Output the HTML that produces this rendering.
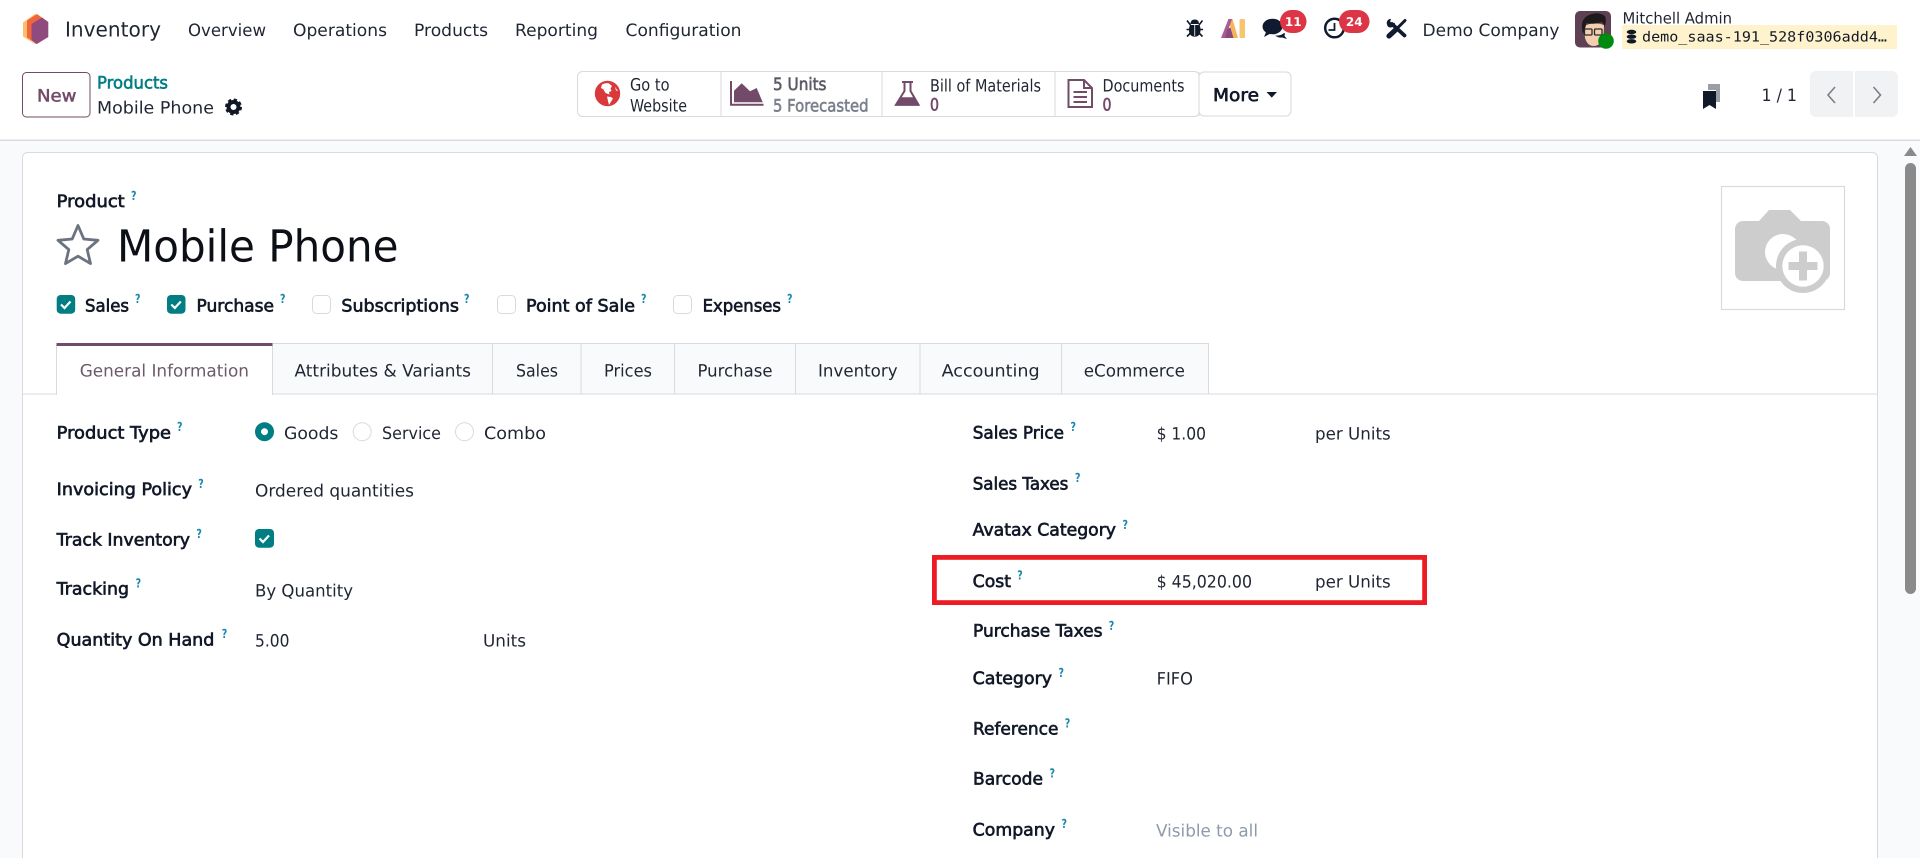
<!DOCTYPE html>
<html lang="en">
<head>
<meta charset="utf-8">
<title>Mobile Phone - Inventory</title>
<style>
html,body{margin:0;padding:0;width:1920px;height:858px;overflow:hidden;background:#fff}
svg{display:block;position:absolute;left:0;top:0}
text{font-family:"DejaVu Sans","Liberation Sans",sans-serif;font-size:17px;fill:#1f2532;text-rendering:geometricPrecision;white-space:pre}
.b{fill:#111827;stroke:#111827;stroke-width:.65px}
.s{font-size:12.5px;font-weight:700;fill:#1a87ad}
.g{fill:#8e9aab}
.m{font-family:"DejaVu Sans Mono","Liberation Mono",monospace;font-size:14px;fill:#111827}
.w{fill:#fff;font-weight:700;font-size:12px}
</style>
</head>
<body>
<svg width="1920" height="858" viewBox="0 0 1920 858" xmlns="http://www.w3.org/2000/svg">
<!-- backgrounds -->
<rect width="1920" height="858" fill="#fff"/>
<rect y="140" width="1920" height="718" fill="#f9fafb"/>
<rect y="139.500" width="1920" height="1.500" fill="#d8dadd"/>
<!-- card -->
<rect x="22.500" y="152.500" width="1855" height="730" rx="5" fill="#fff" stroke="#d8dadd"/>

<!-- scrollbar -->
<path d="M1904 156l6.500-9 6.500 9z" fill="#8a8a8a"/>
<rect x="1905" y="163" width="11" height="431" rx="5.500" fill="#8a8a8a"/>

<!-- navbar logo -->
<path d="M23 22.500L35 14l6 4v22l-6 4-12-7.500z" fill="#fbbf6c"/>
<path d="M27 20.500L37 14l11 8v15l-11 7-10-6.500z" fill="#f0653a"/>
<path d="M31.500 24L42 17.500l6.300 4.500v15L36.500 44 31.500 40z" fill="#8f4a7e"/>
<text x="65" y="36.500" textLength="96" lengthAdjust="spacingAndGlyphs" style="font-size:20.500px">Inventory</text>
<text x="188" y="36" textLength="78" lengthAdjust="spacingAndGlyphs">Overview</text>
<text x="293" y="36" textLength="94" lengthAdjust="spacingAndGlyphs">Operations</text>
<text x="414" y="36" textLength="74" lengthAdjust="spacingAndGlyphs">Products</text>
<text x="515" y="36" textLength="83" lengthAdjust="spacingAndGlyphs">Reporting</text>
<text x="625.500" y="36" textLength="116" lengthAdjust="spacingAndGlyphs">Configuration</text>

<!-- systray: bug -->
<g fill="#111827">
<path d="M1190 25h9.500q1 2 1 5 0 6.500-5.750 6.700-5.750-.2-5.750-6.700 0-3 1-5z"/>
<path d="M1190.500 24q0-4.500 4.250-4.500t4.250 4.500z"/>
</g>
<path d="M1187 20.500l3.500 4.500M1202.500 20.500l-3.500 4.500M1186.500 29.500h4M1203 29.500h-4M1187 36.500l3.500-3.500M1202.500 36.500l-3.500-3.500" stroke="#111827" stroke-width="1.600" fill="none"/>
<path d="M1194.750 25v11" stroke="#fff" stroke-width=".8"/>
<!-- AI -->
<path d="M1228 19h4.500l5.500 19h-4.500l-2.500-9z" fill="#f8b259"/>
<path d="M1228.500 19h3.500l-6.500 19h-4.500z" fill="#a85b8e"/>
<path d="M1227.500 29l3-1.500 3 10.500h-8.500z" fill="#8a4a7c"/>
<rect x="1239.500" y="19" width="5.500" height="19" rx="1" fill="#f8c56e"/>
<!-- chat -->
<ellipse cx="1272.500" cy="26.500" rx="10" ry="7.800" fill="#111b30"/>
<path d="M1264 37l2.500-6 5 2z" fill="#111b30"/>
<path d="M1275 35.500q6 .5 9-2.500l1 .5-.5 2.500 2.500 3-5-1.500q-4 .5-7-2z" fill="#111b30"/>
<rect x="1280" y="10" width="26.500" height="23" rx="11.500" fill="#dc3545"/>
<text class="w" x="1293.250" y="26" text-anchor="middle">11</text>
<!-- clock -->
<circle cx="1334.500" cy="28" r="9.300" fill="none" stroke="#111b30" stroke-width="2.500"/>
<path d="M1334.500 23v7h-6" stroke="#111b30" stroke-width="1.800" fill="none"/>
<rect x="1339" y="10" width="30.500" height="23" rx="11.500" fill="#dc3545"/>
<text class="w" x="1354.250" y="26" text-anchor="middle">24</text>
<!-- tools: wrench and screwdriver -->
<path d="M1392 24l12.500 11.500" stroke="#111b30" stroke-width="3.800" stroke-linecap="round"/>
<path d="M1386.700 23q.3-4 4.300-4.300l-.8 2.800 2 2 2.800-.8q-.3 4-4 4.800-3.800.5-4.300-4.500z" fill="#111b30"/>
<path d="M1405 20.500l-8 8" stroke="#111b30" stroke-width="3" stroke-linecap="round"/>
<path d="M1395.500 30l-6.500 6" stroke="#111b30" stroke-width="5.200" stroke-linecap="round"/>
<text x="1422.500" y="36" textLength="137" lengthAdjust="spacingAndGlyphs">Demo Company</text>

<!-- avatar -->
<rect x="1575" y="11" width="36" height="36.500" rx="5" fill="#5f4156"/>
<path d="M1584 26q10-5 20-1l-.5 12q-3 9-10 9-6 0-8.500-8z" fill="#f2cfae"/>
<path d="M1583 34q-4-15 6-19 9-4 16 1 2 5-.5 11-1-4-3-5-8 3-15 1-1 5-3.500 11z" fill="#1e1a1c"/>
<rect x="1584.500" y="29" width="7.500" height="6" rx="1" fill="none" stroke="#2a2a2a" stroke-width="1.300"/>
<rect x="1594.500" y="29" width="7.500" height="6" rx="1" fill="none" stroke="#2a2a2a" stroke-width="1.300"/>
<circle cx="1606" cy="41" r="7.800" fill="#008a0e"/>
<text x="1622.500" y="23.500" textLength="109.500" lengthAdjust="spacingAndGlyphs" style="font-size:15.500px">Mitchell Admin</text>
<rect x="1622" y="25" width="275" height="24" fill="#fff3cd"/>
<g fill="#111827"><ellipse cx="1631.500" cy="32" rx="4.800" ry="2.200"/><ellipse cx="1631.500" cy="36.700" rx="4.800" ry="2.200"/><ellipse cx="1631.500" cy="41.300" rx="4.800" ry="2.200"/></g>
<text class="m" x="1642" y="41.500" textLength="245" lengthAdjust="spacingAndGlyphs">demo_saas-191_528f0306add4…</text>

<!-- control panel -->
<rect x="22.500" y="72.500" width="67.500" height="44.500" rx="4" fill="#fff" stroke="#714B67"/>
<text x="37" y="101.500" textLength="39.500" lengthAdjust="spacingAndGlyphs" style="fill:#714B67;stroke:#714B67;stroke-width:.5px">New</text>
<text x="97" y="88.500" textLength="71" lengthAdjust="spacingAndGlyphs" style="fill:#017E84;stroke:#017E84;stroke-width:.6px">Products</text>
<text x="97" y="113.500" textLength="117" lengthAdjust="spacingAndGlyphs">Mobile Phone</text>
<circle cx="233.500" cy="107" r="5" fill="none" stroke="#111827" stroke-width="4"/>
<circle cx="233.500" cy="107" r="7.200" fill="none" stroke="#111827" stroke-width="2.600" stroke-dasharray="3.200 2.450"/>

<!-- stat buttons -->
<rect x="577.500" y="71.500" width="622" height="45" rx="5" fill="#fff" stroke="#d8dadd"/>
<path d="M721 72v44M882 72v44M1055 72v44M1199 72v44" stroke="#d8dadd"/>
<!-- globe -->
<circle cx="607.500" cy="93.500" r="12.700" fill="#d9393b"/>
<path d="M602 84.500q4-2 7-1l3 2.500-1.500 2.500 1 2.500-2.500 1 .5 2.500-4-1.500-2-3.500-2.500-1.500zM607 96.500l4 .5 2 1.500-2.500 4-1.500 2.500-1-4zM615 87l3 4-2-.5z" fill="#fff"/>
<text x="630" y="90.500" textLength="39.500" lengthAdjust="spacingAndGlyphs">Go to</text>
<text x="630" y="111.500" textLength="57" lengthAdjust="spacingAndGlyphs">Website</text>
<!-- chart -->
<path d="M731 81v23.700h32.500" fill="none" stroke="#714B67" stroke-width="2"/>
<path d="M734 102.300v-11.600l7.700-7.400 8.300 8 6.700-3.300 6 14.300z" fill="#714B67"/>
<text x="773" y="90" textLength="53.500" lengthAdjust="spacingAndGlyphs" style="fill:#5d5866;stroke:#5d5866;stroke-width:.6px">5 Units</text>
<text x="773" y="111.500" textLength="95.500" lengthAdjust="spacingAndGlyphs" style="fill:#7a7f8c;stroke:#7a7f8c;stroke-width:.6px">5 Forecasted</text>
<!-- flask -->
<path d="M902 82h11M904.500 82v9l-8.500 13.700h22.500L910.500 91v-9" fill="none" stroke="#714B67" stroke-width="2"/>
<path d="M900.500 97.300h14l4.700 8.400h-24z" fill="#714B67"/>
<text x="930" y="91.500" textLength="111" lengthAdjust="spacingAndGlyphs">Bill of Materials</text>
<text x="930" y="110.500" textLength="9" lengthAdjust="spacingAndGlyphs" style="fill:#714B67;stroke:#714B67;stroke-width:.6px">0</text>
<!-- doc -->
<path d="M1068.500 80h15.500l8 8v19h-23.500zM1084 80v8h8" fill="none" stroke="#714B67" stroke-width="2"/>
<path d="M1073.500 92h13.500M1073.500 97h13.500M1073.500 102h13.500" stroke="#714B67" stroke-width="2"/>
<text x="1102.500" y="91.500" textLength="82" lengthAdjust="spacingAndGlyphs">Documents</text>
<text x="1102.500" y="110.500" textLength="9" lengthAdjust="spacingAndGlyphs" style="fill:#714B67;stroke:#714B67;stroke-width:.6px">0</text>
<!-- more -->
<rect x="1199" y="72" width="92" height="44" rx="5" fill="#fff" stroke="#d8dadd"/>
<text class="b" x="1213" y="101" textLength="46" lengthAdjust="spacingAndGlyphs" style="font-size:17.500px">More</text>
<path d="M1266.500 92h10.500l-5.250 5.600z" fill="#111827"/>
<!-- bookmark / pager -->
<path d="M1708 84h12v18h-4V90h-8z" fill="#9a9ea6"/>
<path d="M1703 91h13v18l-6.500-4-6.500 4z" fill="#111827"/>
<text x="1761.500" y="101" textLength="35.500" lengthAdjust="spacingAndGlyphs">1 / 1</text>
<path d="M1816 71h37v46h-37a6 6 0 0 1-6-6V77a6 6 0 0 1 6-6z" fill="#f1f2f4"/>
<path d="M1855 71h37a6 6 0 0 1 6 6v34a6 6 0 0 1-6 6h-37z" fill="#f1f2f4"/>
<path d="M1835 87l-7 8 7 8M1873.500 87l7 8-7 8" fill="none" stroke="#7b7f88" stroke-width="1.600"/>

<!-- product header -->
<text class="b" x="56.700" y="207" textLength="68" lengthAdjust="spacingAndGlyphs">Product</text>
<text class="s" x="131" y="200" textLength="5.500" lengthAdjust="spacingAndGlyphs">?</text>
<path d="M78 225.500l5.800 13.500 14.200 1.300-10.800 9.300 3.300 14-12.500-7.400-12.500 7.400 3.300-14-10.800-9.300 14.200-1.300z" fill="none" stroke="#6b7280" stroke-width="2.800" stroke-linejoin="round"/>
<text x="117" y="261.500" textLength="281.500" lengthAdjust="spacingAndGlyphs" style="font-size:44px;fill:#0c0f16">Mobile Phone</text>

<!-- product kind checkboxes -->
<rect x="56.700" y="295" width="18.500" height="18.700" rx="4" fill="#017E84"/>
<path d="M61 304.500l3.500 3.500 6-6.500" fill="none" stroke="#fff" stroke-width="2.200"/>
<text class="b" x="85" y="311.500" textLength="44" lengthAdjust="spacingAndGlyphs">Sales</text>
<text class="s" x="135" y="303" textLength="5.500" lengthAdjust="spacingAndGlyphs">?</text>
<rect x="167" y="295" width="18.500" height="18.700" rx="4" fill="#017E84"/>
<path d="M171.300 304.500l3.500 3.500 6-6.500" fill="none" stroke="#fff" stroke-width="2.200"/>
<text class="b" x="196.500" y="311.500" textLength="77.500" lengthAdjust="spacingAndGlyphs">Purchase</text>
<text class="s" x="280" y="303" textLength="5.500" lengthAdjust="spacingAndGlyphs">?</text>
<rect x="312.500" y="295.500" width="18" height="18" rx="4" fill="#fff" stroke="#d8dadd"/>
<text class="b" x="341.400" y="311.500" textLength="117.600" lengthAdjust="spacingAndGlyphs">Subscriptions</text>
<text class="s" x="464" y="303" textLength="5.500" lengthAdjust="spacingAndGlyphs">?</text>
<rect x="497.500" y="295.500" width="18" height="18" rx="4" fill="#fff" stroke="#d8dadd"/>
<text class="b" x="526" y="311.500" textLength="109" lengthAdjust="spacingAndGlyphs">Point of Sale</text>
<text class="s" x="641" y="303" textLength="5.500" lengthAdjust="spacingAndGlyphs">?</text>
<rect x="673.500" y="295.500" width="18" height="18" rx="4" fill="#fff" stroke="#d8dadd"/>
<text class="b" x="702.600" y="311.500" textLength="78.400" lengthAdjust="spacingAndGlyphs">Expenses</text>
<text class="s" x="787" y="303" textLength="5.500" lengthAdjust="spacingAndGlyphs">?</text>

<!-- image -->
<rect x="1721.500" y="186.500" width="123" height="123" fill="#fff" stroke="#d8dadd" stroke-width="1.200"/>
<path d="M1743 221h16l10-11h21l11 11h21a8 8 0 0 1 8 8v44a8 8 0 0 1-8 8h-79a8 8 0 0 1-8-8v-44a8 8 0 0 1 8-8z" fill="#cdcdcd"/>
<circle cx="1783" cy="252" r="18" fill="#fff"/>
<circle cx="1803" cy="266" r="27" fill="#cdcdcd"/>
<circle cx="1803" cy="266" r="20.700" fill="#fff"/>
<path d="M1788.500 266h29M1803 251.500v29" stroke="#cdcdcd" stroke-width="8"/>

<!-- tabs -->
<rect x="23" y="393.500" width="1855" height="1" fill="#d8dadd"/>
<rect x="272.500" y="343.500" width="936" height="50" fill="#f9fafb"/>
<path d="M272.500 343.500H1208.500V394M492.500 343.500V394M581 343.500V394M674.600 343.500V394M795.500 343.500V394M920 343.500V394M1061.600 343.500V394" fill="none" stroke="#d8dadd"/>
<rect x="56.500" y="345" width="216" height="50" fill="#fff"/>
<path d="M56.500 345v50M272.500 345v50" stroke="#d8dadd"/>
<rect x="56.500" y="343" width="216" height="3" fill="#714B67"/>
<text x="79.700" y="376.500" textLength="169.300" lengthAdjust="spacingAndGlyphs" style="fill:#6c5a68">General Information</text>
<text x="294.500" y="376.500" textLength="176.500" lengthAdjust="spacingAndGlyphs">Attributes &amp; Variants</text>
<text x="516" y="376.500" textLength="42" lengthAdjust="spacingAndGlyphs">Sales</text>
<text x="604" y="376.500" textLength="48" lengthAdjust="spacingAndGlyphs">Prices</text>
<text x="697.500" y="376.500" textLength="75" lengthAdjust="spacingAndGlyphs">Purchase</text>
<text x="818" y="376.500" textLength="79.600" lengthAdjust="spacingAndGlyphs">Inventory</text>
<text x="941.600" y="376.500" textLength="98" lengthAdjust="spacingAndGlyphs">Accounting</text>
<text x="1083.700" y="376.500" textLength="101.300" lengthAdjust="spacingAndGlyphs">eCommerce</text>

<!-- left group -->
<text class="b" x="56.700" y="438.500" textLength="114.300" lengthAdjust="spacingAndGlyphs">Product Type</text>
<text class="s" x="177" y="431" textLength="5.500" lengthAdjust="spacingAndGlyphs">?</text>
<circle cx="264.500" cy="431.700" r="6.500" fill="#fff" stroke="#017E84" stroke-width="6"/>
<text x="284" y="439" textLength="54.400" lengthAdjust="spacingAndGlyphs">Goods</text>
<circle cx="362.200" cy="431.700" r="9" fill="#fff" stroke="#d8dadd"/>
<text x="382" y="439" textLength="59" lengthAdjust="spacingAndGlyphs">Service</text>
<circle cx="464.500" cy="431.700" r="9" fill="#fff" stroke="#d8dadd"/>
<text x="484" y="439" textLength="62" lengthAdjust="spacingAndGlyphs">Combo</text>

<text class="b" x="56.700" y="495" textLength="135.300" lengthAdjust="spacingAndGlyphs">Invoicing Policy</text>
<text class="s" x="198.300" y="488" textLength="5.500" lengthAdjust="spacingAndGlyphs">?</text>
<text x="255" y="496.500" textLength="159" lengthAdjust="spacingAndGlyphs">Ordered quantities</text>

<text class="b" x="56.700" y="545.500" textLength="133.300" lengthAdjust="spacingAndGlyphs">Track Inventory</text>
<text class="s" x="196.400" y="538" textLength="5.500" lengthAdjust="spacingAndGlyphs">?</text>
<rect x="255" y="529" width="19" height="18.700" rx="4" fill="#017E84"/>
<path d="M259.500 538.500l3.500 3.500 6-6.500" fill="none" stroke="#fff" stroke-width="2.200"/>

<text class="b" x="56.700" y="594.500" textLength="72.300" lengthAdjust="spacingAndGlyphs">Tracking</text>
<text class="s" x="135.600" y="587.500" textLength="5.500" lengthAdjust="spacingAndGlyphs">?</text>
<text x="255" y="596.500" textLength="98" lengthAdjust="spacingAndGlyphs">By Quantity</text>

<text class="b" x="56.700" y="645.500" textLength="157.700" lengthAdjust="spacingAndGlyphs">Quantity On Hand</text>
<text class="s" x="221.700" y="638" textLength="5.500" lengthAdjust="spacingAndGlyphs">?</text>
<text x="255" y="646.500" textLength="34.400" lengthAdjust="spacingAndGlyphs">5.00</text>
<text x="483" y="646.500" textLength="43" lengthAdjust="spacingAndGlyphs">Units</text>

<!-- right group -->
<text class="b" x="972.700" y="438.500" textLength="91.300" lengthAdjust="spacingAndGlyphs">Sales Price</text>
<text class="s" x="1070.500" y="431" textLength="5.500" lengthAdjust="spacingAndGlyphs">?</text>
<text x="1156.600" y="439.500" textLength="49.400" lengthAdjust="spacingAndGlyphs">$ 1.00</text>
<text x="1315" y="439.500" textLength="75.700" lengthAdjust="spacingAndGlyphs">per Units</text>

<text class="b" x="972.700" y="489.500" textLength="95.700" lengthAdjust="spacingAndGlyphs">Sales Taxes</text>
<text class="s" x="1075" y="482" textLength="5.500" lengthAdjust="spacingAndGlyphs">?</text>

<text class="b" x="972.700" y="535.500" textLength="143.300" lengthAdjust="spacingAndGlyphs">Avatax Category</text>
<text class="s" x="1122.500" y="529" textLength="5.500" lengthAdjust="spacingAndGlyphs">?</text>

<rect x="934.400" y="557.400" width="490.200" height="45.200" fill="none" stroke="#ed1c24" stroke-width="4.800"/>
<text class="b" x="972.700" y="586.800" textLength="38.300" lengthAdjust="spacingAndGlyphs">Cost</text>
<text class="s" x="1017.300" y="579.500" textLength="5.500" lengthAdjust="spacingAndGlyphs">?</text>
<text x="1156.600" y="587.500" textLength="95.400" lengthAdjust="spacingAndGlyphs">$ 45,020.00</text>
<text x="1315" y="587.500" textLength="75.700" lengthAdjust="spacingAndGlyphs">per Units</text>

<text class="b" x="973" y="636.500" textLength="129.500" lengthAdjust="spacingAndGlyphs">Purchase Taxes</text>
<text class="s" x="1108.800" y="630" textLength="5.500" lengthAdjust="spacingAndGlyphs">?</text>

<text class="b" x="972.700" y="684" textLength="79.300" lengthAdjust="spacingAndGlyphs">Category</text>
<text class="s" x="1058.500" y="677" textLength="5.500" lengthAdjust="spacingAndGlyphs">?</text>
<text x="1156.600" y="684.500" textLength="36.400" lengthAdjust="spacingAndGlyphs">FIFO</text>

<text class="b" x="973" y="734.500" textLength="85.400" lengthAdjust="spacingAndGlyphs">Reference</text>
<text class="s" x="1064.800" y="727.500" textLength="5.500" lengthAdjust="spacingAndGlyphs">?</text>

<text class="b" x="973" y="784.500" textLength="70" lengthAdjust="spacingAndGlyphs">Barcode</text>
<text class="s" x="1049.500" y="777.500" textLength="5.500" lengthAdjust="spacingAndGlyphs">?</text>

<text class="b" x="972.700" y="835.500" textLength="82.300" lengthAdjust="spacingAndGlyphs">Company</text>
<text class="s" x="1061.500" y="828" textLength="5.500" lengthAdjust="spacingAndGlyphs">?</text>
<text class="g" x="1156" y="836.500" textLength="102" lengthAdjust="spacingAndGlyphs">Visible to all</text>
</svg>
</body>
</html>
